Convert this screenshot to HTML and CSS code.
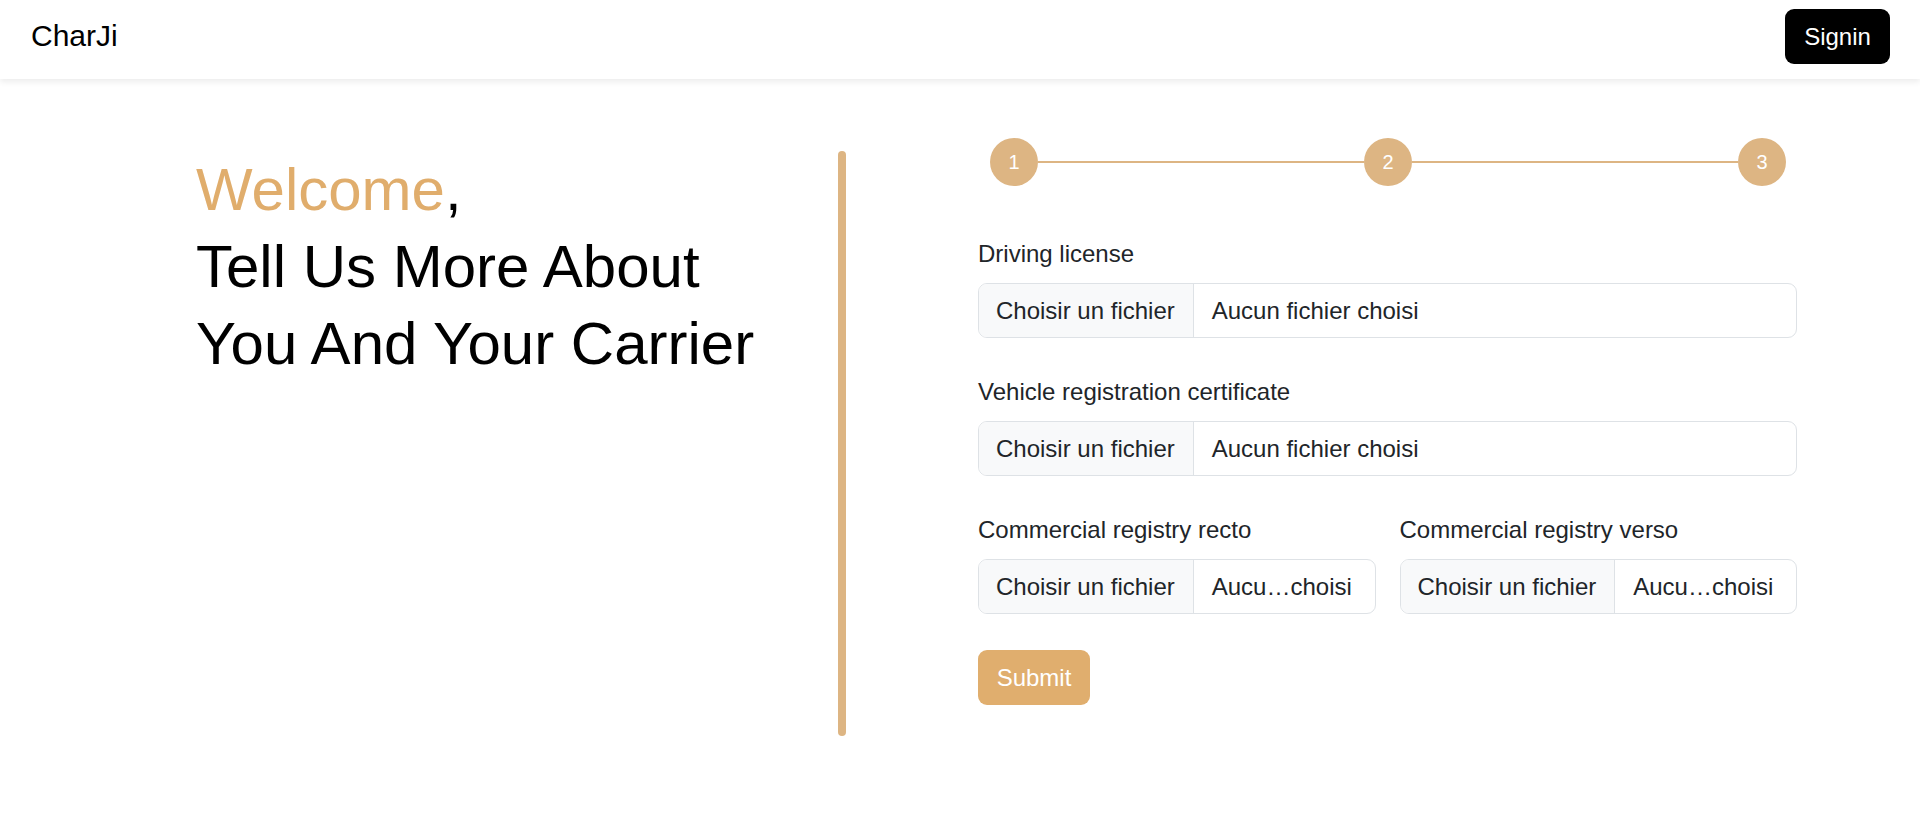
FILE: index.html
```html
<!DOCTYPE html>
<html lang="en">
<head>
<meta charset="utf-8">
<title>CharJi</title>
<link rel="stylesheet" href="styles.css">
</head>
<body>
<header class="navbar">
  <a class="brand" href="#">CharJi</a>
  <button class="signin">Signin</button>
</header>
<main class="main">
  <section class="left-col">
    <h1 class="headline"><span class="accent">Welcome</span>,<br>Tell Us More About<br>You And Your Carrier</h1>
    <div class="divider"></div>
  </section>
  <section class="right-col">
    <div class="stepper">
      <span class="step">1</span>
      <span class="step-line"></span>
      <span class="step">2</span>
      <span class="step-line"></span>
      <span class="step">3</span>
    </div>
    <form class="form">
      <div class="group">
        <label class="label">Driving license</label>
        <div class="file"><span class="file-btn">Choisir un fichier</span><span class="file-name">Aucun fichier choisi</span></div>
      </div>
      <div class="group">
        <label class="label">Vehicle registration certificate</label>
        <div class="file"><span class="file-btn">Choisir un fichier</span><span class="file-name">Aucun fichier choisi</span></div>
      </div>
      <div class="group row2">
        <div class="col">
          <label class="label">Commercial registry recto</label>
          <div class="file"><span class="file-btn">Choisir un fichier</span><span class="file-name">Aucu…choisi</span></div>
        </div>
        <div class="col">
          <label class="label">Commercial registry verso</label>
          <div class="file"><span class="file-btn">Choisir un fichier</span><span class="file-name">Aucu…choisi</span></div>
        </div>
      </div>
      <div class="actions">
        <button type="button" class="submit">Submit</button>
      </div>
    </form>
  </section>
</main>
</body>
</html>
```

FILE: styles.css
```css
* { box-sizing: border-box; }
html, body { margin: 0; padding: 0; }
body {
  font-family: "Liberation Sans", Arial, sans-serif;
  color: #212529;
  background: #fff;
}
.navbar {
  height: 79px;
  padding: 9px 30px 15px 31px;
  display: flex;
  align-items: center;
  justify-content: space-between;
  background: #fff;
  box-shadow: 0 3px 6px rgba(0,0,0,0.075);
  position: relative;
}
.brand {
  font-size: 30px;
  line-height: 45px;
  color: #000;
  text-decoration: none;
  margin-top: -2px;
}
.signin {
  width: 105px;
  height: 55px;
  background: #000;
  color: #fff;
  border: 0;
  border-radius: 9px;
  font-family: inherit;
  font-size: 24px;
  padding: 0;
}
.main {
  width: 1710px;
  margin: 0 auto;
  display: flex;
  padding-top: 59px;
}
.left-col {
  width: 855px;
  padding: 13px 18px 0;
  display: flex;
  align-items: flex-start;
}
.headline {
  margin: 0 0 0 73px;
  font-weight: 400;
  font-size: 60px;
  line-height: 77px;
  color: #000;
}
.accent { color: #e0ad6c; }
.divider {
  margin-left: auto;
  margin-right: 96px;
  width: 8px;
  height: 585px;
  border-radius: 4px;
  background: #ddb583;
}
.right-col {
  width: 855px;
  padding: 0 18px;
}
.stepper {
  display: flex;
  align-items: center;
  margin: 0 11px 0 12px;
  height: 48px;
}
.step {
  width: 48px;
  height: 48px;
  border-radius: 50%;
  background: #ddb583;
  color: #fff;
  font-size: 20px;
  display: flex;
  align-items: center;
  justify-content: center;
  flex: none;
}
.step-line {
  flex: 1;
  height: 2px;
  background: #ddb583;
}
.form { margin-top: 50px; }
.group { margin-bottom: 36px; }
.row2 { display: flex; gap: 24px; }
.row2 .col { flex: 1; min-width: 0; }
.label {
  display: block;
  font-size: 24px;
  line-height: 36px;
  margin-bottom: 11px;
  color: #212529;
}
.file {
  display: flex;
  height: 55px;
  border: 1px solid #dee2e6;
  border-radius: 9px;
  overflow: hidden;
  font-size: 24px;
  color: #212529;
}
.file-btn {
  display: flex;
  align-items: center;
  padding: 0 18px 0 17px;
  background: #f8f9fa;
  border-right: 1px solid #dee2e6;
  white-space: nowrap;
  flex: none;
}
.file-name {
  display: flex;
  align-items: center;
  padding: 0 18px;
  white-space: nowrap;
}
.submit {
  width: 112px;
  height: 55px;
  border: 0;
  border-radius: 9px;
  background: #e0ae6e;
  color: #fff;
  font-family: inherit;
  font-size: 24px;
  padding: 0;
}
```
